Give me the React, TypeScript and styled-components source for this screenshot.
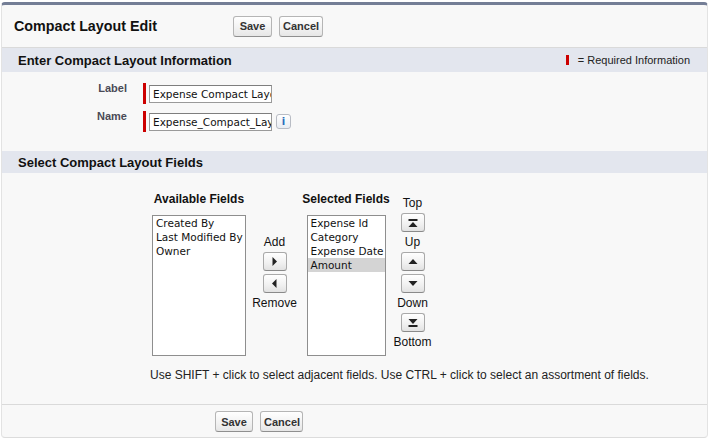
import React from "react";
import styled, { createGlobalStyle } from "styled-components";

const Global = createGlobalStyle`
  html, body { margin: 0; padding: 0; background: #ffffff; }
  body { font-family: "Liberation Sans", Arial, sans-serif; color: #222; }
  * { box-sizing: border-box; }
`;

const Page = styled.div`
  padding: 2px 3px 3px 1px;
`;

const Panel = styled.div`
  width: 707px;
  background: #f8f8f8;
  border-top: 3px solid #747e96;
  border-left: 1px solid #e3e3e3;
  border-right: 1px solid #e3e3e3;
  border-bottom: 1px solid #dcdcdc;
  border-radius: 4px;
`;

const Header = styled.div`
  display: flex;
  align-items: center;
  height: 43px;
  border-bottom: 1px solid #dadada;
`;

const Title = styled.h1`
  margin: 0;
  width: 231px;
  padding-left: 12px;
  font-size: 14.3px;
  font-weight: bold;
  color: #111;
`;

const ButtonRow = styled.div<{ $left?: number }>`
  display: flex;
  gap: 7px;
  padding-left: ${(p) => p.$left ?? 0}px;
`;

const Btn = styled.button<{ $w: number }>`
  width: ${(p) => p.$w}px;
  height: 21px;
  padding: 0 3px;
  font-family: "Liberation Sans", Arial, sans-serif;
  font-size: 11px;
  font-weight: bold;
  color: #333;
  background: linear-gradient(#ffffff, #f1f1f1 60%, #e6e6e6);
  border: 1px solid #b5b5b5;
  border-bottom-color: #8f8f8f;
  border-radius: 3px;
`;

const SectionHeader = styled.div<{ $h: number }>`
  display: flex;
  align-items: center;
  justify-content: space-between;
  height: ${(p) => p.$h}px;
  padding: 0 17px 0 16px;
  background: #e3e6ee;
`;

const SectionTitle = styled.h2`
  margin: 0;
  font-size: 13px;
  font-weight: bold;
  color: #111;
`;

const Required = styled.div`
  display: flex;
  align-items: center;
  gap: 9px;
  padding-left: 2px;
  font-size: 11px;
  color: #222;
`;

const RedBar = styled.span<{ $h: number }>`
  display: block;
  width: 3px;
  height: ${(p) => p.$h}px;
  background: #c00;
`;

const Form = styled.div`
  display: grid;
  grid-template-columns: 125px auto;
  column-gap: 16px;
  row-gap: 7px;
  padding: 11px 0 19px;
  justify-content: start;
`;

const FieldLabel = styled.label`
  align-self: start;
  text-align: right;
  font-size: 11px;
  line-height: 11px;
  font-weight: bold;
  color: #4a4a56;
`;

const FieldCell = styled.div`
  display: flex;
  align-items: center;
  height: 21px;
`;

const TextBox = styled.div`
  margin-left: 3px;
  width: 123px;
  height: 18px;
  padding: 0 3px;
  overflow: hidden;
  white-space: nowrap;
  font-family: "DejaVu Sans", sans-serif;
  font-size: 10.5px;
  line-height: 16px;
  color: #111;
  background: #fff;
  border: 1px solid #9a9a9a;
  border-top-color: #7e7e7e;
`;

const InfoBtn = styled.span`
  display: flex;
  align-items: center;
  justify-content: center;
  margin-left: 4px;
  width: 15px;
  height: 15px;
  font-family: "DejaVu Sans", sans-serif;
  font-size: 10px;
  font-weight: bold;
  color: #2a6ebd;
  background: linear-gradient(#ffffff, #e8ecf2);
  border: 1px solid #b8bcc4;
  border-radius: 3px;
`;

const FieldsSection = styled.div`
  padding: 19px 0 22px 148px;
`;

const Picker = styled.div`
  display: grid;
  grid-template-columns: 94px 57px 86px 47px;
  align-items: start;
  margin-left: 2px;
`;

const ListColumn = styled.div`
  display: flex;
  flex-direction: column;
  align-items: center;
  gap: 9px;
`;

const ListHeading = styled.div`
  font-size: 12px;
  line-height: 14px;
  font-weight: bold;
  color: #111;
  white-space: nowrap;
`;

const ListBox = styled.div<{ $w: number }>`
  width: ${(p) => p.$w}px;
  height: 141px;
  padding: 0;
  background: #fff;
  border: 1px solid #8e8e8e;
  overflow: hidden;
`;

const ListItem = styled.div<{ $selected?: boolean }>`
  padding-left: 3px;
  font-family: "DejaVu Sans", sans-serif;
  font-size: 10.5px;
  line-height: 14px;
  color: #111;
  white-space: nowrap;
  background: ${(p) => (p.$selected ? "#d4d4d4" : "transparent")};
`;

const ControlColumn = styled.div<{ $top: number }>`
  display: flex;
  flex-direction: column;
  align-items: center;
  gap: 3px;
  margin-top: ${(p) => p.$top}px;
`;

const ControlLabel = styled.div`
  font-size: 12px;
  line-height: 14px;
  color: #111;
  white-space: nowrap;
`;

const ArrowBtn = styled.button`
  display: flex;
  align-items: center;
  justify-content: center;
  width: 24px;
  height: 19px;
  padding: 0;
  background: linear-gradient(#ffffff, #f0f0f0 60%, #e2e2e2);
  border: 1px solid #a9a9a9;
  border-bottom-color: #8a8a8a;
  border-radius: 3px;
`;

const Hint = styled.div`
  margin-top: 12px;
  font-size: 12px;
  line-height: 14px;
  color: #222;
`;

const Footer = styled.div`
  height: 33px;
  border-top: 1px solid #dadada;
  padding-top: 6px;
`;

type Dir = "right" | "left" | "top" | "up" | "down" | "bottom";

const Arrow = ({ dir }: { dir: Dir }) => {
  const fill = "#222";
  switch (dir) {
    case "right":
      return (
        <svg width="9" height="9" viewBox="0 0 9 9">
          <polygon points="2.5,0 7,4.5 2.5,9" fill={fill} />
        </svg>
      );
    case "left":
      return (
        <svg width="9" height="9" viewBox="0 0 9 9">
          <polygon points="6.5,0 2,4.5 6.5,9" fill={fill} />
        </svg>
      );
    case "up":
      return (
        <svg width="10" height="9" viewBox="0 0 10 9">
          <polygon points="0.5,7 5,2 9.5,7" fill={fill} />
        </svg>
      );
    case "down":
      return (
        <svg width="10" height="9" viewBox="0 0 10 9">
          <polygon points="0.5,2 5,7 9.5,2" fill={fill} />
        </svg>
      );
    case "top":
      return (
        <svg width="10" height="10" viewBox="0 0 10 10">
          <rect x="0.5" y="1" width="9" height="2" fill={fill} />
          <polygon points="0.5,9 5,4 9.5,9" fill={fill} />
        </svg>
      );
    case "bottom":
      return (
        <svg width="10" height="10" viewBox="0 0 10 10">
          <polygon points="0.5,1 5,6 9.5,1" fill={fill} />
          <rect x="0.5" y="7" width="9" height="2" fill={fill} />
        </svg>
      );
  }
};

const available = ["Created By", "Last Modified By", "Owner"];
const selected = ["Expense Id", "Category", "Expense Date", "Amount"];

export default function App() {
  return (
    <>
      <Global />
      <Page>
        <Panel>
          <Header>
            <Title>Compact Layout Edit</Title>
            <ButtonRow>
              <Btn $w={39}>Save</Btn>
              <Btn $w={44}>Cancel</Btn>
            </ButtonRow>
          </Header>

          <SectionHeader $h={24}>
            <SectionTitle>Enter Compact Layout Information</SectionTitle>
            <Required>
              <RedBar $h={10} />
              <span>= Required Information</span>
            </Required>
          </SectionHeader>

          <Form>
            <FieldLabel>Label</FieldLabel>
            <FieldCell>
              <RedBar $h={21} />
              <TextBox role="textbox">Expense Compact Layout</TextBox>
            </FieldCell>
            <FieldLabel>Name</FieldLabel>
            <FieldCell>
              <RedBar $h={21} />
              <TextBox role="textbox">Expense_Compact_Layout</TextBox>
              <InfoBtn>i</InfoBtn>
            </FieldCell>
          </Form>

          <SectionHeader $h={22}>
            <SectionTitle>Select Compact Layout Fields</SectionTitle>
          </SectionHeader>

          <FieldsSection>
            <Picker>
              <ListColumn>
                <ListHeading>Available Fields</ListHeading>
                <ListBox $w={94}>
                  {available.map((f) => (
                    <ListItem key={f}>{f}</ListItem>
                  ))}
                </ListBox>
              </ListColumn>

              <ControlColumn $top={43}>
                <ControlLabel>Add</ControlLabel>
                <ArrowBtn>
                  <Arrow dir="right" />
                </ArrowBtn>
                <ArrowBtn>
                  <Arrow dir="left" />
                </ArrowBtn>
                <ControlLabel>Remove</ControlLabel>
              </ControlColumn>

              <ListColumn>
                <ListHeading>Selected Fields</ListHeading>
                <ListBox $w={79}>
                  {selected.map((f) => (
                    <ListItem key={f} $selected={f === "Amount"}>
                      {f}
                    </ListItem>
                  ))}
                </ListBox>
              </ListColumn>

              <ControlColumn $top={4}>
                <ControlLabel>Top</ControlLabel>
                <ArrowBtn>
                  <Arrow dir="top" />
                </ArrowBtn>
                <ControlLabel>Up</ControlLabel>
                <ArrowBtn>
                  <Arrow dir="up" />
                </ArrowBtn>
                <ArrowBtn>
                  <Arrow dir="down" />
                </ArrowBtn>
                <ControlLabel>Down</ControlLabel>
                <ArrowBtn>
                  <Arrow dir="bottom" />
                </ArrowBtn>
                <ControlLabel>Bottom</ControlLabel>
              </ControlColumn>
            </Picker>
            <Hint>
              Use SHIFT + click to select adjacent fields. Use CTRL + click to
              select an assortment of fields.
            </Hint>
          </FieldsSection>

          <Footer>
            <ButtonRow $left={213}>
              <Btn $w={38}>Save</Btn>
              <Btn $w={43}>Cancel</Btn>
            </ButtonRow>
          </Footer>
        </Panel>
      </Page>
    </>
  );
}
